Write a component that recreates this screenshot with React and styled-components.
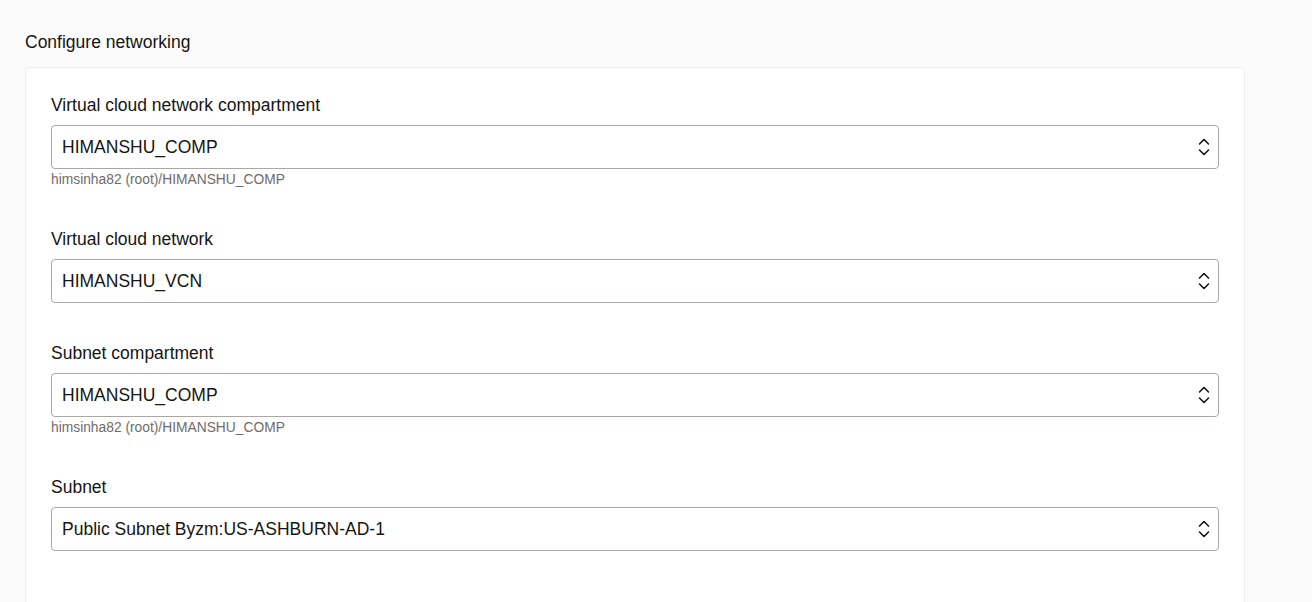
import React from 'react';
import styled, { createGlobalStyle } from 'styled-components';

const GlobalStyle = createGlobalStyle`
  html, body {
    margin: 0;
    padding: 0;
    background: #fbfbfb;
    font-family: "Liberation Sans", Arial, sans-serif;
    color: #161513;
  }
`;

const Page = styled.div`
  padding: 32px 67px 0 25px;
  height: 602px;
  box-sizing: border-box;
  overflow: hidden;
`;

const Title = styled.h2`
  margin: 0 0 15px;
  font-size: 17.5px;
  line-height: 20px;
  font-weight: normal;
  color: #161513;
`;

const Card = styled.section`
  background: #fff;
  border: 1px solid #f1efed;
  border-radius: 4px;
  padding: 27px 25px 60px;
  min-height: 600px;
`;

const Field = styled.div`
  display: flex;
  flex-direction: column;
  margin-bottom: 40px;
`;

const Label = styled.label`
  font-size: 17.5px;
  line-height: 20px;
  margin-bottom: 10px;
  color: #161513;
`;

const SelectBox = styled.div`
  display: flex;
  align-items: center;
  height: 44px;
  box-sizing: border-box;
  border: 1px solid #a9a6a3;
  border-radius: 4px;
  padding: 0 8px 0 10px;
  font-size: 17.5px;
  color: #161513;
  background: #fff;
`;

const Value = styled.span`
  flex: 1;
`;

const Help = styled.div`
  font-size: 13.8px;
  line-height: 16px;
  margin-top: 3px;
  height: 17px;
  color: #6f6c69;
`;

const Chevrons = () => (
  <svg width="12" height="18" viewBox="0 0 12 18" fill="none" stroke="#161513" strokeWidth="1.6" strokeLinecap="round" strokeLinejoin="round">
    <path d="M1.5 6 L6 1.5 L10.5 6" />
    <path d="M1.5 12 L6 16.5 L10.5 12" />
  </svg>
);

const fields = [
  { label: 'Virtual cloud network compartment', value: 'HIMANSHU_COMP', help: 'himsinha82 (root)/HIMANSHU_COMP' },
  { label: 'Virtual cloud network', value: 'HIMANSHU_VCN' },
  { label: 'Subnet compartment', value: 'HIMANSHU_COMP', help: 'himsinha82 (root)/HIMANSHU_COMP' },
  { label: 'Subnet', value: 'Public Subnet Byzm:US-ASHBURN-AD-1' },
];

export default function App() {
  return (
    <>
      <GlobalStyle />
      <Page>
        <Title>Configure networking</Title>
        <Card>
          {fields.map((f, i) => (
            <Field key={i}>
              <Label>{f.label}</Label>
              <SelectBox>
                <Value>{f.value}</Value>
                <Chevrons />
              </SelectBox>
              {f.help && <Help>{f.help}</Help>}
            </Field>
          ))}
        </Card>
      </Page>
    </>
  );
}
